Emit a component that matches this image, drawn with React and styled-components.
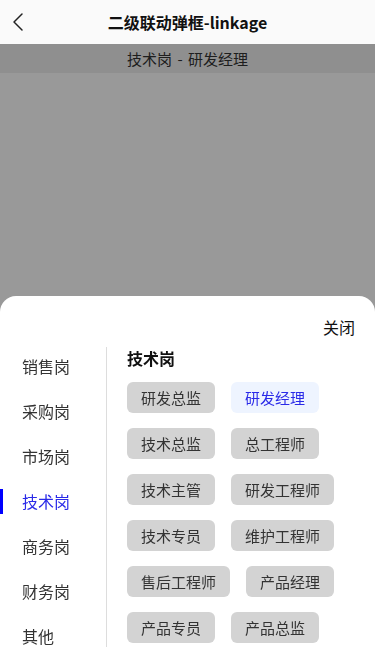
import React, { useState } from 'react';
import styled, { createGlobalStyle } from 'styled-components';

const GlobalStyle = createGlobalStyle`
    * {
        box-sizing: border-box;
    }

    body {
        margin: 0;
        background: #fff;
        font-family: "Noto Sans CJK SC", "Noto Sans", sans-serif;
        color: #333;
    }
`;

const groups = [
    { name: '销售岗', jobs: ['销售总监', '销售经理', '销售专员'] },
    { name: '采购岗', jobs: ['采购总监', '采购经理', '采购专员'] },
    { name: '市场岗', jobs: ['市场总监', '市场经理', '市场专员'] },
    {
        name: '技术岗',
        jobs: [
            '研发总监',
            '研发经理',
            '技术总监',
            '总工程师',
            '技术主管',
            '研发工程师',
            '技术专员',
            '维护工程师',
            '售后工程师',
            '产品经理',
            '产品专员',
            '产品总监',
        ],
    },
    { name: '商务岗', jobs: ['商务总监', '商务经理', '商务专员'] },
    { name: '财务岗', jobs: ['财务总监', '会计', '出纳'] },
    { name: '其他', jobs: ['其他'] },
];

export default function App() {
    const [groupIndex, setGroupIndex] = useState(3);
    const [job, setJob] = useState('研发经理');
    const group = groups[groupIndex];

    return (
        <>
            <GlobalStyle />
            <Page>
                <NavBar>
                    <BackButton aria-label='返回'>
                        <svg width='14' height='20' viewBox='0 0 14 20'>
                            <path
                                d='M11 2 L3 10 L11 18'
                                fill='none'
                                stroke='#222'
                                strokeWidth='1.5'
                                strokeLinecap='round'
                                strokeLinejoin='round'
                            />
                        </svg>
                    </BackButton>
                    <NavTitle>二级联动弹框-linkage</NavTitle>
                </NavBar>
                <ResultRow>
                    {group.name} - {job}
                </ResultRow>
            </Page>

            <Mask />
            <Sheet>
                <SheetHeader>
                    <CloseButton>关闭</CloseButton>
                </SheetHeader>
                <SheetBody>
                    <GroupList>
                        {groups.map((g, i) => (
                            <GroupItem
                                key={g.name}
                                $active={i === groupIndex}
                                onClick={() => setGroupIndex(i)}
                            >
                                {g.name}
                            </GroupItem>
                        ))}
                    </GroupList>
                    <JobPanel>
                        <JobTitle>{group.name}</JobTitle>
                        <TagList>
                            {group.jobs.map((j) => (
                                <Tag
                                    key={j}
                                    $selected={j === job}
                                    onClick={() => setJob(j)}
                                >
                                    {j}
                                </Tag>
                            ))}
                        </TagList>
                    </JobPanel>
                </SheetBody>
            </Sheet>
        </>
    );
}

const Page = styled.div`
    min-height: 667px;
    background: #fff;
`;

const NavBar = styled.header`
    position: relative;
    z-index: 20;
    height: 44px;
    display: flex;
    align-items: center;
    justify-content: center;
    background: #fafafa;
`;

const BackButton = styled.span`
    position: absolute;
    left: 11px;
    top: 12px;
    display: flex;
`;

const NavTitle = styled.h1`
    margin: 0;
    font-size: 16px;
    font-weight: 700;
    color: #111;
`;

const ResultRow = styled.div`
    height: 29px;
    line-height: 29px;
    text-align: center;
    font-size: 15px;
    word-spacing: 2px;
    color: #333;
    background: #eee;
`;

const Mask = styled.div`
    position: fixed;
    inset: 0;
    z-index: 10;
    background: rgba(0, 0, 0, 0.4);
`;

const Sheet = styled.div`
    position: fixed;
    left: 0;
    right: 0;
    bottom: 0;
    z-index: 30;
    height: 371px;
    display: flex;
    flex-direction: column;
    background: #fff;
    border-radius: 16px 16px 0 0;
`;

const SheetHeader = styled.div`
    display: flex;
    justify-content: flex-end;
    padding: 20px 20px 0;
    height: 48px;
    flex-shrink: 0;
`;

const CloseButton = styled.span`
    font-size: 16px;
    line-height: 22px;
    color: #111;
`;

const SheetBody = styled.div`
    flex: 1;
    display: flex;
    overflow: hidden;
`;

const GroupList = styled.ul`
    width: 106px;
    margin: 0;
    padding: 0;
    list-style: none;
    flex-shrink: 0;
`;

const GroupItem = styled.li`
    position: relative;
    height: 45px;
    line-height: 45px;
    padding-left: 22px;
    font-size: 16px;
    color: ${(p) => (p.$active ? '#2a2ae8' : '#333')};

    &::before {
        content: '';
        display: ${(p) => (p.$active ? 'block' : 'none')};
        position: absolute;
        left: 0;
        top: 10px;
        width: 3px;
        height: 25px;
        background: #0000ff;
    }
`;

const JobPanel = styled.div`
    flex: 1;
    margin: 3px 0 20px;
    padding: 0 16px 0 20px;
    border-left: 1px solid #ddd;
`;

const JobTitle = styled.div`
    font-size: 16px;
    font-weight: 700;
    line-height: 22px;
    color: #111;
`;

const TagList = styled.div`
    display: flex;
    flex-wrap: wrap;
    gap: 15px 16px;
    margin-top: 13px;
`;

const Tag = styled.span`
    height: 31px;
    line-height: 31px;
    padding: 0 14px;
    border-radius: 6px;
    font-size: 15px;
    white-space: nowrap;
    color: ${(p) => (p.$selected ? '#2a2ae8' : '#333')};
    background: ${(p) => (p.$selected ? '#eef4ff' : '#d3d3d3')};
`;
